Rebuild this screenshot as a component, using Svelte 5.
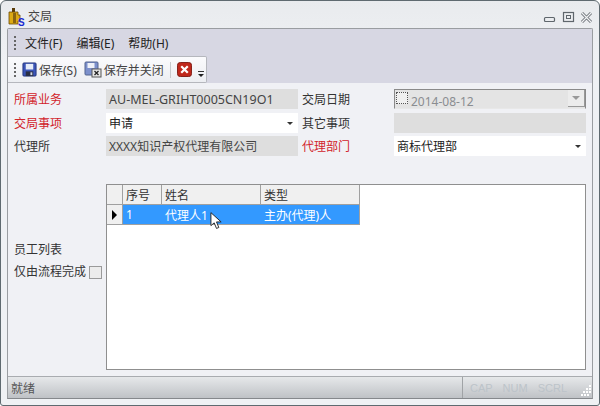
<script>
	const menus = ['文件(F)', '编辑(E)', '帮助(H)'];
	const columns = ['序号', '姓名', '类型'];
	const row = ['1', '代理人1', '主办(代理)人'];
</script>

<div class="window">
	<header class="titlebar">
		<svg class="app-icon" width="18" height="19" viewBox="0 0 18 19">
			<rect x="5" y="0" width="3" height="4" fill="#5a3d0a" />
			<path d="M2 4h9v3h2v6h-2v3H2z" fill="#dca913" stroke="#6b4a08" stroke-width="0.8" />
			<rect x="6" y="5" width="3" height="10" fill="#8a6410" />
			<text x="11" y="18" class="s">S</text>
		</svg>
		<span class="title">交局</span>
		<div class="controls">
			<svg width="50" height="14" viewBox="0 0 50 14">
				<rect x="1.5" y="6.5" width="10" height="4" rx="1" fill="none" stroke="#5f666c" stroke-width="1.2" />
				<rect x="20.5" y="1.5" width="10" height="9" fill="none" stroke="#5f666c" stroke-width="1.2" />
				<rect x="23.5" y="4.5" width="4" height="3" fill="none" stroke="#5f666c" />
				<path d="M39 2l9 9M48 2l-9 9" stroke="#6a7076" stroke-width="3" />
				<path d="M39 2l9 9M48 2l-9 9" stroke="#f2f3f5" stroke-width="1.2" />
			</svg>
		</div>
	</header>

	<div class="client">
		<div class="bars">
			<nav class="menubar">
				<span class="grip"></span>
				{#each menus as m}
					<span class="menu">{m}</span>
				{/each}
			</nav>
			<div class="toolbar">
				<span class="grip"></span>
				<svg class="tool-icon" width="15" height="15" viewBox="0 0 16 16">
					<rect x="1" y="1" width="14" height="14" rx="1" fill="#3b55b8" stroke="#23337c" />
					<rect x="4" y="2" width="8" height="6" fill="#e6ecf8" />
					<rect x="4" y="10" width="8" height="5" fill="#2a2f45" />
					<rect x="9" y="11" width="2" height="3" fill="#cfd6e6" />
				</svg>
				<span class="tool">保存(S)</span>
				<svg class="tool-icon second" width="18" height="17" viewBox="0 0 18 17">
					<rect x="1" y="1" width="13" height="13" rx="1" fill="#7c90cc" stroke="#52648f" />
					<rect x="3.5" y="2" width="7" height="5" fill="#eef1f8" />
					<rect x="8" y="8" width="9" height="8" fill="#e8e8e8" stroke="#555" />
					<path d="M10.5 10l4 4M14.5 10l-4 4" stroke="#222" stroke-width="1.3" />
				</svg>
				<span class="tool">保存并关闭</span>
				<span class="sep"></span>
				<svg class="tool-icon close" width="15" height="15" viewBox="0 0 16 16">
					<rect x="0.5" y="0.5" width="15" height="15" rx="3" fill="#c0281c" stroke="#7e1a12" />
					<path d="M4.5 4.5l7 7M11.5 4.5l-7 7" stroke="#fff" stroke-width="2.4" />
				</svg>
				<svg class="overflow" width="7" height="7" viewBox="0 0 7 7">
					<rect x="0" y="0" width="6" height="1" fill="#333" />
					<path d="M0 3h6L3 6z" fill="#222" />
				</svg>
			</div>
		</div>

		<div class="body">
			<div class="form">
				<label class="req">所属业务</label>
				<div class="field readonly code">AU-MEL-GRIHT0005CN19O1</div>
				<label>交局日期</label>
				<div class="field date">
					<span class="datebox"></span>
					<span class="dateval">2014-08-12</span>
					<span class="datebtn"><i class="arrow grey"></i></span>
				</div>

				<label class="req">交局事项</label>
				<div class="field select">申请<i class="arrow"></i></div>
				<label>其它事项</label>
				<div class="field readonly"></div>

				<label>代理所</label>
				<div class="field readonly">XXXX知识产权代理有限公司</div>
				<label class="req">代理部门</label>
				<div class="field select">商标代理部<i class="arrow"></i></div>
			</div>

			<div class="lower">
				<div class="side">
					<span>员工列表</span>
					<div class="only">
						<span>仅由流程完成</span>
						<span class="check"></span>
					</div>
				</div>
				<div class="grid">
					<div class="grid-row head">
						<span class="rowhead"></span>
						{#each columns as c}
							<span class="cell">{c}</span>
						{/each}
					</div>
					<div class="grid-row selected">
						<span class="rowhead"><i class="marker"></i></span>
						{#each row as c}
							<span class="cell">{c}</span>
						{/each}
					</div>
					<svg class="cursor" width="13" height="20" viewBox="0 0 14 20">
						<path d="M1 1v14l3.5-3 2.5 6 2.5-1-2.5-6h5z" fill="#fff" stroke="#222" stroke-width="1" stroke-linejoin="round" />
					</svg>
				</div>
			</div>
		</div>

		<footer class="status">
			<span class="ready">就绪</span>
			<div class="keys">
				<span>CAP</span>
				<span>NUM</span>
				<span>SCRL</span>
				<svg class="resize" width="11" height="11" viewBox="0 0 11 11">
					<g fill="#fff">
						<rect x="8" y="0" width="2" height="2" /><rect x="5" y="3" width="2" height="2" /><rect x="8" y="3" width="2" height="2" />
						<rect x="2" y="6" width="2" height="2" /><rect x="5" y="6" width="2" height="2" /><rect x="8" y="6" width="2" height="2" />
						<rect x="0" y="9" width="2" height="2" /><rect x="3" y="9" width="2" height="2" /><rect x="6" y="9" width="2" height="2" />
					</g>
				</svg>
			</div>
		</footer>
	</div>
</div>

<style>
	:global(body) {
		margin: 0;
		background: #fff;
	}
	.window {
		box-sizing: border-box;
		width: 600px;
		height: 406px;
		display: flex;
		flex-direction: column;
		padding: 0 6px 6px;
		border: 1px solid #5f6a70;
		border-radius: 6px 6px 3px 3px;
		background: linear-gradient(#e9ebee, #eff1f4 60px);
		font-family: 'Noto Sans', 'Noto Sans CJK SC', sans-serif;
		font-size: 12px;
		color: #333;
	}
	.titlebar {
		height: 27px;
		flex: none;
		display: flex;
		align-items: center;
		gap: 3px;
		padding-top: 3px;
		box-sizing: border-box;
	}
	.app-icon {
		margin-top: 2px;
	}
	.s {
		font-family: 'Liberation Sans', sans-serif;
		font-size: 10px;
		font-weight: bold;
		fill: #1a2ad0;
	}
	.title {
		color: #444;
	}
	.controls {
		margin-left: auto;
		display: flex;
		padding-top: 4px;
	}
	.client {
		flex: 1;
		min-height: 0;
		display: flex;
		flex-direction: column;
		border: 1px solid #9a9da1;
		border-bottom-color: #85888c;
		border-radius: 2px 2px 0 0;
		background: #f0f1f5;
	}
	.bars {
		flex: none;
		height: 54px;
		background: #d7d7e3;
		display: flex;
		flex-direction: column;
	}
	.menubar {
		height: 27px;
		display: flex;
		align-items: center;
		padding-left: 6px;
	}
	.menubar .grip {
		margin-right: 9px;
	}
	.grip {
		width: 2px;
		height: 14px;
		background: repeating-linear-gradient(#666 0 2px, transparent 2px 4px);
		flex: none;
	}
	.menu {
		margin-right: 14px;
		color: #222;
	}
	.toolbar {
		width: 199px;
		height: 27px;
		box-sizing: border-box;
		display: flex;
		align-items: center;
		padding-left: 6px;
		background: linear-gradient(#fbfbfd, #eceef2);
		border: 1px solid #b5b7bd;
		border-left: 0;
		border-radius: 0 2px 2px 0;
		white-space: nowrap;
	}
	.tool-icon {
		margin-left: 6px;
		flex: none;
	}
	.tool-icon.second {
		margin-left: 7px;
	}
	.tool-icon.close {
		margin-left: 6px;
	}
	.tool {
		margin-left: 2px;
		color: #444;
		flex: none;
	}
	.sep {
		width: 1px;
		height: 16px;
		flex: none;
		margin-left: 6px;
		background: #c8cacd;
	}
	.overflow {
		margin: 9px 0 0 6px;
		flex: none;
	}
	.body {
		flex: 1;
		min-height: 0;
		display: flex;
		flex-direction: column;
		padding: 6px 6px 6px;
	}
	.form {
		display: grid;
		grid-template-columns: 92px 192px 96px 192px;
		grid-auto-rows: 20px;
		row-gap: 3.5px;
	}
	.form label:nth-child(4n + 3) {
		padding-left: 4px;
		box-sizing: border-box;
	}
	label {
		display: flex;
		align-items: center;
	}
	.req {
		color: #d2232a;
	}
	.field {
		box-sizing: border-box;
		padding-left: 3px;
		display: flex;
		align-items: center;
		white-space: nowrap;
		position: relative;
	}
	.code {
		font-size: 12.5px;
	}
	.readonly {
		background: #dedede;
		color: #444;
	}
	.select {
		background: #fff;
		color: #222;
	}
	.date {
		background: #e4e4e4;
		border: 1px solid #8a8a8a;
		border-bottom-color: #e8e8e8;
		color: #8a8d91;
		padding-left: 1px;
	}
	.datebox {
		width: 12px;
		height: 12px;
		box-sizing: border-box;
		border: 1px dotted #555;
		background: #f0f0f0;
		flex: none;
		margin-top: -3px;
		margin-right: 3px;
	}
	.dateval {
		margin-top: 4px;
	}
	.datebtn {
		position: absolute;
		right: 0;
		top: 0;
		width: 16px;
		height: 16px;
		background: #ececec;
		border-right: 1px solid #999;
		border-bottom: 1px solid #999;
	}
	.arrow {
		position: absolute;
		right: 5px;
		top: 9px;
		width: 0;
		height: 0;
		border: 3px solid transparent;
		border-top: 3px solid #333;
		border-bottom: 0;
	}
	.arrow.grey {
		border-top-color: #999;
		right: 4px;
		top: 6px;
		border-width: 4px 4px 0;
		border-bottom: 0;
	}
	.lower {
		flex: 1;
		min-height: 0;
		display: flex;
		margin-top: 28px;
	}
	.side {
		width: 92px;
		flex: none;
		display: flex;
		flex-direction: column;
		padding-top: 57px;
		gap: 2px;
		color: #333;
		box-sizing: border-box;
	}
	.side > span {
		line-height: 18px;
	}
	.only {
		display: flex;
		align-items: center;
		gap: 3px;
		white-space: nowrap;
		margin-right: -4px;
		height: 20px;
	}
	.check {
		width: 13px;
		height: 13px;
		box-sizing: border-box;
		border: 1px solid #9a9a9a;
		background: #ececec;
		flex: none;
		margin-top: 3px;
	}
	.grid {
		flex: 1;
		position: relative;
		background: #fff;
		border: 1px solid #8f8f8f;
		box-sizing: border-box;
	}
	.grid-row {
		display: grid;
		grid-template-columns: 16px 39px 99px 99px;
		width: 253px;
		box-sizing: border-box;
	}
	.head {
		height: 20px;
		background: #f0f0f0;
		color: #333;
	}
	.head .cell,
	.head .rowhead {
		border-right: 1px solid #a0a0a0;
		border-bottom: 1px solid #a0a0a0;
	}
	.selected {
		height: 20px;
		background: #3399ff;
		color: #fff;
		border-bottom: 1px solid #a0a0a0;
		border-right: 1px solid #a0a0a0;
	}
	.cell {
		padding-left: 3px;
		display: flex;
		align-items: center;
		box-sizing: border-box;
	}
	.rowhead {
		background: #f0f0f0;
		display: flex;
		align-items: center;
		justify-content: center;
		box-sizing: border-box;
	}
	.selected .rowhead {
		border-right: 1px solid #a0a0a0;
	}
	.marker {
		width: 0;
		height: 0;
		border: 5px solid transparent;
		border-left: 5px solid #000;
		border-right: 0;
	}
	.cursor {
		position: absolute;
		left: 103px;
		top: 26px;
	}
	.status {
		flex: none;
		height: 22px;
		box-sizing: border-box;
		display: flex;
		align-items: center;
		background: linear-gradient(#e6e8ea, #bfc2c6);
		border-top: 1px solid #a9acb0;
		padding-left: 3px;
		color: #555;
	}
	.keys {
		margin-left: auto;
		height: 100%;
		box-sizing: border-box;
		display: flex;
		align-items: center;
		gap: 10px;
		border-left: 1px solid #a0a3a6;
		padding-left: 7px;
		color: #bcc3c9;
		font-family: 'Liberation Sans', sans-serif;
		font-size: 11px;
	}
	.resize {
		align-self: flex-end;
		margin-left: 4px;
		margin-bottom: 2px;
		flex: none;
	}
</style>
